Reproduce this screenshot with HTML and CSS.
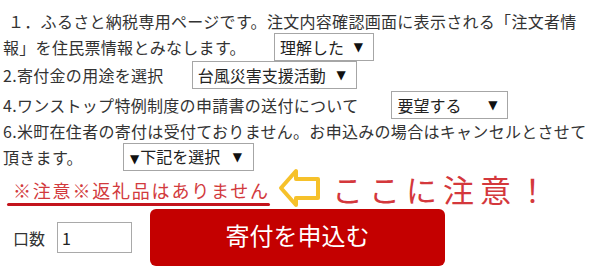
FILE: index.html
```html
<!DOCTYPE html>
<html lang="ja">
<head>
    <meta charset="UTF-8">
    <meta name="viewport" content="width=device-width, initial-scale=1.0">
    <title>寄付申込み</title>
    <link rel="stylesheet" href="styles.css">
</head>
<body>
    <div class="order-form">
        <div class="item">
            <div class="line first">１．ふるさと納税専用ページです。注文内容確認画面に表示される「注文者情</div>
            <div class="row">
                <span>報」を住民票情報とみなします。</span>
                <div class="pick pick-agree"><span>理解した</span><span class="tri">▼</span></div>
            </div>
        </div>

        <div class="row">
            <span>2.寄付金の用途を選択</span>
            <div class="pick pick-use"><span>台風災害支援活動</span><span class="tri">▼</span></div>
        </div>

        <div class="row row-gap">
            <span>4.ワンストップ特例制度の申請書の送付について</span>
            <div class="pick pick-onestop"><span>要望する</span><span class="tri">▼</span></div>
        </div>

        <div class="item">
            <div class="line">6.米町在住者の寄付は受付ておりません。お申込みの場合はキャンセルとさせて</div>
            <div class="row">
                <span>頂きます。</span>
                <div class="pick pick-resident"><span><span class="tri">▼</span>下記を選択</span><span class="tri">▼</span></div>
            </div>
        </div>

        <div class="notice-row">
            <div class="notice">
                <div class="notice-text">※注意※返礼品はありません</div>
            </div>
            <svg class="arrow" width="46" height="42" viewBox="0 0 46 42">
                <path d="M4 21 L19 4 L19 12 L41 12 L41 31 L19 31 L19 38 Z" fill="#fff" stroke="#f6c12a" stroke-width="4" stroke-linejoin="round"/>
            </svg>
            <div class="callout">ここに注意！</div>
        </div>

        <div class="submit-row">
            <label for="qty">口数</label>
            <input id="qty" class="qty" type="text" value="1">
            <button class="apply-btn">寄付を申込む</button>
        </div>
    </div>
</body>
</html>
```

FILE: styles.css
```css
body {
    margin: 0;
    background-color: #fff;
    font-family: "Noto Sans CJK JP", "Noto Sans", sans-serif;
    color: #333;
}

.order-form {
    padding: 9px 0 0 3px;
    font-size: 16px;
    line-height: 24px;
}

.line {
    height: 24px;
    white-space: nowrap;
    letter-spacing: 0.3px;
}

.line.first {
    padding-left: 5px;
}

.row {
    display: flex;
    align-items: center;
    height: 28px;
    white-space: nowrap;
    letter-spacing: 0.3px;
}

.row-gap {
    margin-top: 2px;
}

.pick {
    display: flex;
    align-items: center;
    justify-content: space-between;
    box-sizing: border-box;
    height: 28px;
    padding: 0 10px 0 5px;
    border: 1px solid #a6a6a6;
    background: #fff;
    color: #222;
    letter-spacing: 0;
}

.tri {
    font-family: "DejaVu Sans", sans-serif;
    font-size: 12px;
    color: #111;
}

.pick-agree {
    width: 100px;
    margin-left: 28px;
}

.pick-use {
    width: 165px;
    margin-left: 28px;
}

.pick-onestop {
    width: 117px;
    margin-left: 33px;
}

.pick-resident {
    width: 131px;
    margin-left: 40px;
    padding-left: 6px;
}

.pick-resident .tri {
    margin-right: 1px;
}

.notice-row {
    display: flex;
    align-items: center;
    height: 35px;
}

.notice {
    align-self: flex-end;
    width: 263px;
    margin-left: 4px;
}

.notice-text {
    padding-left: 6px;
    font-size: 18px;
    line-height: 22px;
    letter-spacing: 1.8px;
    color: #d23a3d;
    margin-bottom: 2px;
    white-space: nowrap;
}

.notice::after {
    content: "";
    display: block;
    height: 3px;
    border-radius: 2px;
    background-color: #c3141c;
}

.arrow {
    margin-left: 7px;
    margin-top: -2px;
}

.callout {
    margin-left: 9px;
    font-size: 31px;
    line-height: 36px;
    letter-spacing: 6px;
    color: #d4383c;
    white-space: nowrap;
}

.submit-row {
    display: flex;
    align-items: center;
    margin-top: 3px;
    padding-left: 10px;
}

.submit-row label {
    font-size: 16px;
}

.qty {
    box-sizing: border-box;
    width: 75px;
    height: 31px;
    margin-left: 12px;
    padding: 0 4px;
    border: 1px solid #a9a9a9;
    font-family: "Noto Sans CJK JP", sans-serif;
    font-size: 16px;
    color: #222;
}

.apply-btn {
    width: 295px;
    height: 57px;
    margin-left: 18px;
    padding: 0 0 6px;
    border: none;
    border-radius: 6px;
    background-color: #c40000;
    color: #fff;
    font-family: "Noto Sans CJK JP", sans-serif;
    font-size: 24px;
    cursor: pointer;
}
```
